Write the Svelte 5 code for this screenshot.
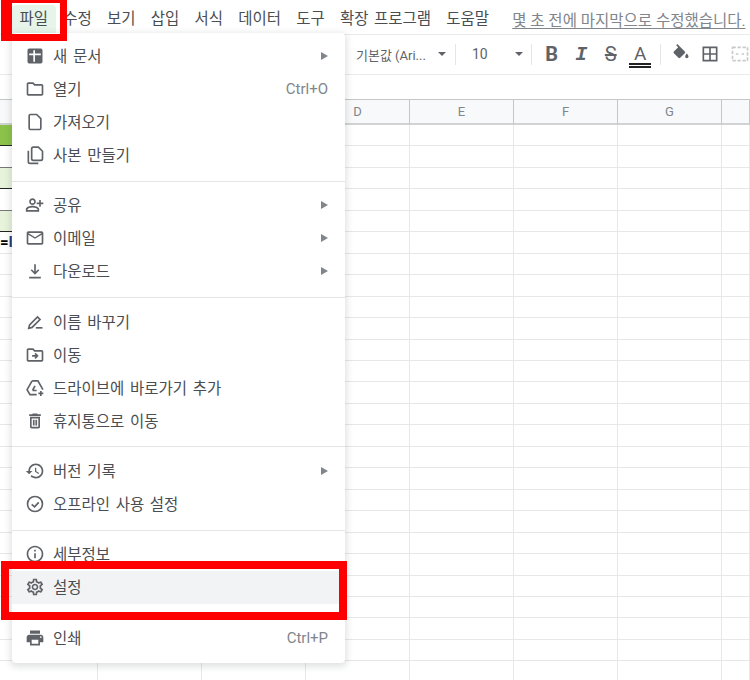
<script>
  const menubar = ['파일', '수정', '보기', '삽입', '서식', '데이터', '도구', '확장 프로그램', '도움말'];

  const folder = 'M20 6h-8l-2-2H4c-1.1 0-1.99.9-1.99 2L2 18c0 1.1.9 2 2 2h16c1.1 0 2-.9 2-2V8c0-1.1-.9-2-2-2zm0 12H4V6h5.17l2 2H20v10z';

  // d = filled path, s = stroked path
  const icons = {
    add: { d: 'M19 3H5a2 2 0 0 0-2 2v14a2 2 0 0 0 2 2h14a2 2 0 0 0 2-2V5a2 2 0 0 0-2-2zm-9 8H5V9h5V5h2v4h7v2h-7v8h-2v-8z' },
    folder: { d: folder },
    file: { s: 'M6.5 3H14l5 5v11.5a1.5 1.5 0 0 1-1.5 1.5h-11A1.5 1.5 0 0 1 5 19.5v-15A1.5 1.5 0 0 1 6.5 3z' },
    copy: { s: 'M10 2.5h6l5 5v9a2 2 0 0 1-2 2h-9a2 2 0 0 1-2-2v-12a2 2 0 0 1 2-2zM4 7v13a2 2 0 0 0 2 2h10' },
    share: { d: 'M9 6c1.1 0 2 .9 2 2s-.9 2-2 2-2-.9-2-2 .9-2 2-2m0 9c2.7 0 5.8 1.29 6 2v1H3v-.99c.2-.72 3.3-2.01 6-2.01m0-11C6.79 4 5 5.79 5 8s1.79 4 4 4 4-1.79 4-4-1.79-4-4-4zm0 9c-2.67 0-8 1.34-8 4v3h16v-3c0-2.66-5.33-4-8-4zm10-4V6h-2v3h-3v2h3v3h2v-3h3V9h-3z' },
    mail: { d: 'M22 6c0-1.1-.9-2-2-2H4c-1.1 0-2 .9-2 2v12c0 1.1.9 2 2 2h16c1.1 0 2-.9 2-2V6zm-2 0l-8 5-8-5h16zm0 12H4V8l8 5 8-5v10z' },
    download: { s: 'M12 4v11M7.5 10.5l4.5 4.5 4.5-4.5M5 20h14' },
    rename: { d: 'M13 18h8v2h-8z', s: 'M4.5 19.5l1-4L15 6l3 3-9.5 9.5z' },
    move: { d: folder, s: 'M8.5 13H15M12 10l3 3-3 3' },
    drive: { s: 'M8.5 3.5h7l6 10.5M8.5 3.5l-6 10.5 3.5 6h8M9 15l3-5.5M9 15h5M19 15.5v6M16 18.5h6' },
    trash: { d: 'M16 9v10H8V9h8m-1.5-6h-5l-1 1H5v2h14V4h-3.5l-1-1zM18 7H6v12c0 1.1.9 2 2 2h8c1.1 0 2-.9 2-2V7z', s: 'M10.5 10.5v7M13.5 10.5v7' },
    history: { d: 'M13 3c-4.97 0-9 4.03-9 9H1l3.89 3.89.07.14L9 12H6c0-3.87 3.13-7 7-7s7 3.13 7 7-3.13 7-7 7c-1.93 0-3.68-.79-4.94-2.06l-1.42 1.42C8.27 19.99 10.51 21 13 21c4.97 0 9-4.03 9-9s-4.03-9-9-9zm-1 5v5l4.28 2.54.72-1.21-3.5-2.08V8H12z' },
    offline: { s: 'M12 3a9 9 0 1 0 0 18 9 9 0 0 0 0-18zM8 12.5l3.5 3 5-5.5' },
    info: { d: 'M11 7h2v2h-2zm0 4h2v6h-2zm1-9C6.48 2 2 6.48 2 12s4.48 10 10 10 10-4.48 10-10S17.52 2 12 2zm0 18c-4.41 0-8-3.59-8-8s3.59-8 8-8 8 3.59 8 8-3.59 8-8 8z' },
    gear: { d: 'M19.43 12.98c.04-.32.07-.64.07-.98 0-.34-.03-.66-.07-.98l2.11-1.65c.19-.15.24-.42.12-.64l-2-3.46c-.09-.16-.26-.25-.44-.25-.06 0-.12.01-.17.03l-2.49 1c-.52-.4-1.08-.73-1.69-.98l-.38-2.65C14.46 2.18 14.25 2 14 2h-4c-.25 0-.46.18-.49.42l-.38 2.65c-.61.25-1.17.59-1.69.98l-2.49-1c-.06-.02-.12-.03-.18-.03-.17 0-.34.09-.43.25l-2 3.46c-.13.22-.07.49.12.64l2.11 1.65c-.04.32-.07.65-.07.98 0 .33.03.66.07.98l-2.11 1.65c-.19.15-.24.42-.12.64l2 3.46c.09.16.26.25.44.25.06 0 .12-.01.17-.03l2.49-1c.52.4 1.08.73 1.69.98l.38 2.65c.03.24.24.42.49.42h4c.25 0 .46-.18.49-.42l.38-2.65c.61-.25 1.17-.59 1.69-.98l2.49 1c.06.02.12.03.18.03.17 0 .34-.09.43-.25l2-3.46c.12-.22.07-.49-.12-.64l-2.11-1.65zm-1.98-1.71c.04.31.05.52.05.73 0 .21-.02.43-.05.73l-.14 1.13.89.7 1.08.84-.7 1.21-1.27-.51-1.04-.42-.9.68c-.43.32-.84.56-1.25.73l-1.06.43-.16 1.13-.2 1.35h-1.4l-.19-1.35-.16-1.13-1.06-.43c-.43-.18-.83-.41-1.23-.71l-.91-.7-1.06.43-1.27.51-.7-1.21 1.08-.84.89-.7-.14-1.13c-.03-.31-.05-.54-.05-.74s.02-.43.05-.73l.14-1.13-.89-.7-1.08-.84.7-1.21 1.27.51 1.04.42.9-.68c.43-.32.84-.56 1.25-.73l1.06-.43.16-1.13.2-1.35h1.39l.19 1.35.16 1.13 1.06.43c.43.18.83.41 1.23.71l.91.7 1.06-.43 1.27-.51.7 1.21-1.07.85-.89.7.14 1.13zM12 8c-2.21 0-4 1.79-4 4s1.79 4 4 4 4-1.79 4-4-1.79-4-4-4zm0 6c-1.1 0-2-.9-2-2s.9-2 2-2 2 .9 2 2-.9 2-2 2z' },
    print: { d: 'M19 8H5c-1.66 0-3 1.34-3 3v6h4v4h12v-4h4v-6c0-1.66-1.34-3-3-3zm-3 11H8v-5h8v5zm3-7c-.55 0-1-.45-1-1s.45-1 1-1 1 .45 1 1-.45 1-1 1zm-1-9H6v4h12V3z' }
  };

  const groups = [
    [
      { label: '새 문서', icon: 'add', arrow: true },
      { label: '열기', icon: 'folder', key: 'Ctrl+O' },
      { label: '가져오기', icon: 'file' },
      { label: '사본 만들기', icon: 'copy' }
    ],
    [
      { label: '공유', icon: 'share', arrow: true },
      { label: '이메일', icon: 'mail', arrow: true },
      { label: '다운로드', icon: 'download', arrow: true }
    ],
    [
      { label: '이름 바꾸기', icon: 'rename' },
      { label: '이동', icon: 'move' },
      { label: '드라이브에 바로가기 추가', icon: 'drive' },
      { label: '휴지통으로 이동', icon: 'trash' }
    ],
    [
      { label: '버전 기록', icon: 'history', arrow: true },
      { label: '오프라인 사용 설정', icon: 'offline' }
    ],
    [
      { label: '세부정보', icon: 'info' },
      { label: '설정', icon: 'gear', active: true }
    ],
    [{ label: '인쇄', icon: 'print', key: 'Ctrl+P' }]
  ];

  const columns = ['', '', '', 'D', 'E', 'F', 'G', ''];
  const firstCol = ['green', 'plain grey', 'pale', 'plain grey', 'pale', 'formula'];
  const rows = Array.from({ length: 26 }, (_, i) => firstCol[i] ?? '');
</script>

<div class="page">
  <nav class="menubar">
    {#each menubar as name, i}
      <span class="menubar-item" class:open={i === 0}>{name}</span>
    {/each}
    <span class="saved">몇 초 전에 마지막으로 수정했습니다.</span>
  </nav>

  <div class="toolbar">
    <div class="select font">
      <span>기본값 (Ari...</span>
      <i class="caret"></i>
    </div>
    <b class="sep"></b>
    <div class="select size">
      <span>10</span>
      <i class="caret"></i>
    </div>
    <b class="sep"></b>
    <div class="tools">
      <span class="tool bold">B</span>
      <span class="tool italic">I</span>
      <span class="tool strike">S</span>
      <span class="tool"><span class="color">A</span></span>
    </div>
    <b class="sep sep-last"></b>
    <div class="tools">
      <span class="tool">
        <svg width="20" height="20" viewBox="0 0 24 24" fill="#5f6368">
          <path d="M16.56 8.94L7.62 0 6.21 1.41l2.38 2.38-5.15 5.15a1.49 1.49 0 0 0 0 2.12l5.5 5.5c.29.29.68.44 1.06.44s.77-.15 1.06-.44l5.5-5.5c.59-.58.59-1.53 0-2.12zM19 11.5s-2 2.17-2 3.5c0 1.1.9 2 2 2s2-.9 2-2c0-1.33-2-3.5-2-3.5z" />
        </svg>
      </span>
      <span class="tool">
        <svg width="20" height="20" viewBox="0 0 24 24" fill="#5f6368">
          <path d="M3 3v18h18V3H3zm8 16H5v-6h6v6zm0-8H5V5h6v6zm8 8h-6v-6h6v6zm0-8h-6V5h6v6z" />
        </svg>
      </span>
      <span class="tool">
        <svg width="20" height="20" viewBox="0 0 24 24" fill="none" stroke="#c8cacc" stroke-width="2" stroke-dasharray="4 2">
          <path d="M3 4h18v16H3zM7 12h3M14 12h3" />
        </svg>
      </span>
    </div>
  </div>

  <div class="formula-bar"></div>

  <div class="sheet">
    <div class="row head">
      {#each columns as col}
        <div class="cell">{col}</div>
      {/each}
    </div>
    {#each rows as kind}
      <div class="row">
        <div class="cell first {kind}">
          {#if kind === 'formula'}=<em>I</em><u>I</u>{/if}
        </div>
        {#each columns.slice(1) as _}
          <div class="cell"></div>
        {/each}
      </div>
    {/each}
  </div>

  <div class="menu">
    {#each groups as group, g}
      {#if g > 0}<hr />{/if}
      {#each group as item}
        <div class="item" class:active={item.active}>
          <svg class="icon" width="20" height="20" viewBox="0 0 24 24">
            {#if icons[item.icon].d}
              <path d={icons[item.icon].d} fill="#5f6368" />
            {/if}
            {#if icons[item.icon].s}
              <path d={icons[item.icon].s} fill="none" stroke="#5f6368" stroke-width="2" />
            {/if}
          </svg>
          <span class="label">{item.label}</span>
          {#if item.key}<span class="key">{item.key}</span>{/if}
          {#if item.arrow}<i class="arrow"></i>{/if}
        </div>
      {/each}
    {/each}
  </div>

  <div class="mark mark-file"></div>
  <div class="mark mark-settings"></div>
</div>

<style>
  :global(body) {
    margin: 0;
    background: #fff;
  }

  .page {
    position: relative;
    width: 750px;
    height: 680px;
    overflow: hidden;
    font-family: Roboto, "Noto Sans CJK KR", sans-serif;
    color: #4a4e52;
    word-spacing: 1.8px;
  }

  /* menu bar */
  .menubar {
    display: flex;
    align-items: center;
    height: 35px;
    padding-left: 12px;
    box-sizing: border-box;
    border-bottom: 1px solid #e8eaed;
    font-size: 15.5px;
    white-space: nowrap;
  }

  .menubar-item {
    flex: none;
    padding: 0 7.6px;
    line-height: 29px;
    margin-top: 5px;
  }

  .menubar-item.open {
    background: #e6f4ea;
    border-radius: 4px 4px 0 0;
  }

  .saved {
    margin-left: 15.5px;
    margin-top: 4px;
    color: #80868b;
    word-spacing: 0;
    text-decoration: underline;
    text-underline-offset: 2px;
  }

  /* toolbar */
  .toolbar {
    display: flex;
    align-items: center;
    height: 40px;
    padding: 0 0 1px 356px;
    box-sizing: border-box;
    border-bottom: 1px solid #e8eaed;
    white-space: nowrap;
  }

  .select {
    flex: none;
    display: flex;
    align-items: center;
    justify-content: space-between;
    box-sizing: border-box;
    font-size: 13px;
    color: #5f6368;
    word-spacing: 0;
  }

  .select.font {
    width: 99px;
    padding-right: 9px;
  }

  .select.size {
    width: 75px;
    padding: 0 8px 0 16px;
    font-size: 14px;
  }

  .caret {
    width: 0;
    height: 0;
    border-left: 4px solid transparent;
    border-right: 4px solid transparent;
    border-top: 4px solid #5f6368;
  }

  .sep {
    flex: none;
    width: 1px;
    height: 21px;
    background: #e3e5e8;
  }

  .sep-last {
    margin-left: 5px;
  }

  .tools {
    flex: none;
    display: flex;
    margin-left: 5px;
  }

  .tool {
    flex: none;
    display: flex;
    align-items: center;
    justify-content: center;
    width: 29.5px;
    height: 24px;
    color: #5f6368;
    font-size: 20px;
  }

  .tool.bold {
    font-weight: 700;
  }

  .tool.italic {
    font-family: "Liberation Mono", monospace;
    font-style: italic;
    font-weight: 700;
  }

  .tool.strike {
    text-decoration: line-through;
    text-decoration-thickness: 2px;
    font-weight: 400;
  }

  .color {
    width: 22px;
    margin-top: 3px;
    text-align: center;
    font-size: 19px;
    line-height: 19px;
    border-bottom: 5px double #222;
  }

  .formula-bar {
    height: 24px;
  }

  /* sheet */
  .sheet {
    font-size: 13px;
    color: #80868b;
  }

  .row {
    display: grid;
    grid-template-columns: 98px repeat(6, 104px) 28px;
    height: 21.46px;
  }

  .row.head {
    height: 26px;
    background: #f8f9fa;
    border-top: 1px solid #c4c7c5;
    box-sizing: border-box;
  }

  .cell {
    box-sizing: border-box;
    border-right: 1px solid #e6e7e8;
    border-bottom: 1px solid #e6e7e8;
  }

  .head .cell {
    display: flex;
    align-items: center;
    justify-content: center;
    border-right-color: #c4c7c5;
    border-bottom: 2px solid #d0d2d3;
  }

  .first.green {
    background: #8bc34a;
    border-bottom-color: #222;
  }

  .first.grey {
    border-bottom-color: #777;
  }

  .first.pale {
    background: #e8f3dc;
    border-bottom-color: #222;
  }

  .first.formula {
    color: #000;
    font-size: 15px;
    font-weight: 700;
    line-height: 20px;
  }

  .first em {
    font-style: normal;
    color: #1a3f7a;
  }

  .first u {
    text-decoration: none;
    color: #b5651d;
  }

  /* file menu */
  .menu {
    position: absolute;
    left: 12px;
    top: 33px;
    width: 333px;
    height: 630px;
    box-sizing: border-box;
    padding: 6.5px 0;
    background: #fff;
    border-radius: 4px;
    box-shadow: 0 2px 6px 2px rgba(60, 64, 67, 0.15);
    font-size: 15.5px;
  }

  .item {
    display: flex;
    align-items: center;
    height: 33px;
    padding: 0 17px 0 13px;
  }

  .item.active {
    background: #f1f3f4;
  }

  .icon {
    flex: none;
    margin-right: 8px;
  }

  .label {
    flex: 1;
    padding-bottom: 2px;
  }

  .key {
    font-size: 15px;
    color: #80868b;
  }

  .arrow {
    width: 0;
    height: 0;
    border-left: 7px solid #80868b;
    border-top: 4px solid transparent;
    border-bottom: 4px solid transparent;
  }

  hr {
    height: 1px;
    margin: 9.33px 0 7px;
    border: 0;
    background: #e2e4e6;
  }

  /* red annotations drawn over the screenshot */
  .mark {
    position: absolute;
    box-sizing: border-box;
    border-style: solid;
    border-color: #f00;
  }

  .mark-file {
    left: 1px;
    top: 0;
    width: 66px;
    height: 41px;
    border-width: 3px 7px 7px 11px;
  }

  .mark-settings {
    left: 1px;
    top: 561px;
    width: 346px;
    height: 59px;
    border-width: 8px;
  }
</style>
